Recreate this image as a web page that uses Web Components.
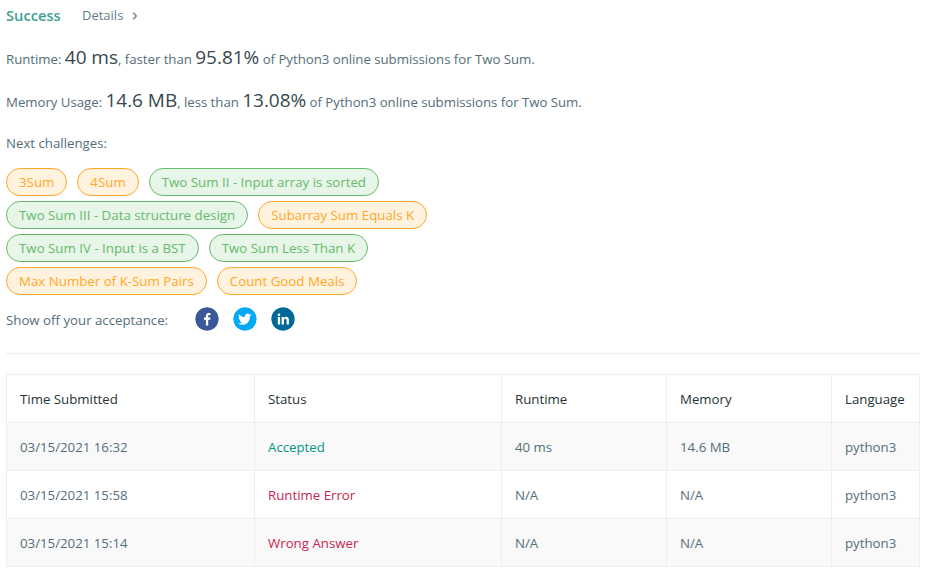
<!DOCTYPE html>
<html>
<head>
<meta charset="utf-8">
<title>Submission result</title>
<style>
    html, body { margin: 0; background: #fff; }
    body { font-family: "Open Sans", "Noto Sans", sans-serif; font-size: 13.25px; color: #546e7a; }
</style>
</head>
<body>
<result-page>
    <result-header></result-header>
    <stat-line label="Runtime" value="40 ms" cmp="faster" pct="95.81%"></stat-line>
    <stat-line label="Memory Usage" value="14.6 MB" cmp="less" pct="13.08%"></stat-line>
    <next-challenges>
        <tag-pill kind="medium">3Sum</tag-pill>
        <tag-pill kind="medium">4Sum</tag-pill>
        <tag-pill kind="easy">Two Sum II - Input array is sorted</tag-pill>
        <tag-pill kind="easy">Two Sum III - Data structure design</tag-pill>
        <tag-pill kind="medium">Subarray Sum Equals K</tag-pill>
        <tag-pill kind="easy">Two Sum IV - Input is a BST</tag-pill>
        <tag-pill kind="easy">Two Sum Less Than K</tag-pill>
        <tag-pill kind="medium">Max Number of K-Sum Pairs</tag-pill>
        <tag-pill kind="medium">Count Good Meals</tag-pill>
    </next-challenges>
    <share-row></share-row>
    <submission-table></submission-table>
</result-page>

<script>
class ResultPage extends HTMLElement {
    constructor() {
        super();
        this.attachShadow({mode: 'open'});
        this.shadowRoot.innerHTML = `<style>
            :host { display: block; padding: 0 7px 0 6px; }
        </style><slot></slot>`;
    }
}

class ResultHeader extends HTMLElement {
    constructor() {
        super();
        this.attachShadow({mode: 'open'});
        this.shadowRoot.innerHTML = `<style>
            :host { display: flex; align-items: center; height: 30px; margin-bottom: 8px; }
            .ok { font-weight: 600; font-size: 14.7px; color: #3d9f94; width: 76px; }
            .details { color: #607d8b; font-size: 13px; }
            svg { margin-left: 9px; margin-top: 2px; }
        </style>
        <span class="ok">Success</span>
        <span class="details">Details</span>
        <svg width="6" height="8" viewBox="0 0 6 8"><path d="M1.2 .8 4.4 4 1.2 7.2" fill="none" stroke="#607d8b" stroke-width="1.3"/></svg>`;
    }
}

class StatLine extends HTMLElement {
    constructor() {
        super();
        this.attachShadow({mode: 'open'});
        const a = n => this.getAttribute(n);
        this.shadowRoot.innerHTML = `<style>
            :host { display: block; height: 43px; line-height: 43px; white-space: pre; font-size: 13.25px; letter-spacing: -0.035px; }
            b { font-weight: 400; font-size: 19px; color: #37474f; line-height: 1; }
        </style><span>${a('label')}: <b>${a('value')}</b>, ${a('cmp')} than <b>${a('pct')}</b> of Python3 online submissions for Two Sum.</span>`;
    }
}

class NextChallenges extends HTMLElement {
    constructor() {
        super();
        this.attachShadow({mode: 'open'});
        this.shadowRoot.innerHTML = `<style>
            :host { display: block; }
            p { margin: 0; height: 38px; line-height: 38px; }
            .list { display: flex; flex-wrap: wrap; column-gap: 10px; row-gap: 5px; padding-top: 6px; width: 440px; }
        </style><p>Next challenges:</p><div class="list"><slot></slot></div>`;
    }
}

class TagPill extends HTMLElement {
    constructor() {
        super();
        this.attachShadow({mode: 'open'});
        this.shadowRoot.innerHTML = `<style>
            :host { display: inline-flex; align-items: center; box-sizing: border-box; height: 28px; padding: 0 12px; border-radius: 14px; border: 1px solid; font-size: 13.3px; white-space: nowrap; }
            :host([kind=medium]) { color: #ffa726; background: #fff3e0; border-color: #ffa726; }
            :host([kind=easy]) { color: #66bb6a; background: #e8f5e9; border-color: #66bb6a; }
        </style><slot></slot>`;
    }
}

class ShareRow extends HTMLElement {
    constructor() {
        super();
        this.attachShadow({mode: 'open'});
        this.shadowRoot.innerHTML = `<style>
            :host { display: flex; align-items: center; height: 24px; margin-top: 12px; padding-bottom: 22px; border-bottom: 1px solid #eeeeee; }
            .label { width: 189px; margin-top: 2px; }
            .ic { width: 24px; height: 24px; border-radius: 50%; margin-right: 14px; }
            svg { display: block; }
        </style>
        <span class="label">Show off your acceptance:</span>
        <svg class="ic" viewBox="0 0 24 24"><circle cx="12" cy="12" r="11.7" fill="#3b5998"/><path d="M13.2 18.500v-5.700h1.900l.3-2.300h-2.200V9.100c0-.7.2-1.100 1.100-1.100h1.200V6c-.2 0-.9-.1-1.700-.1-1.700 0-2.900 1-2.900 3v1.600H9v2.300h1.900v5.700z" fill="#fff"/></svg>
        <svg class="ic" viewBox="0 0 24 24"><circle cx="12" cy="12" r="11.7" fill="#03a9f4"/><path d="M18.800 8c-.5.2-1 .4-1.600.4.600-.3 1-.8 1.200-1.500-.5.3-1.100.5-1.800.7a2.800 2.800 0 0 0-4.800 2.500c-2.300-.1-4.400-1.200-5.800-2.900-.7 1.300-.4 2.900.9 3.800-.5 0-.9-.1-1.300-.4 0 1.400 1 2.500 2.300 2.800-.4.1-.9.1-1.300 0 .4 1.100 1.400 1.900 2.600 2-1.200.9-2.700 1.300-4.200 1.100 4.900 3.100 11.900.5 11.900-7.100v-.4c.6-.3 1.100-.8 1.500-1.400z" fill="#fff"/></svg>
        <svg class="ic" viewBox="0 0 24 24"><circle cx="12" cy="12" r="11.7" fill="#006997"/><path d="M6.800 10h2.300v7.400H6.800zM8 6.400a1.300 1.300 0 1 1 0 2.700 1.300 1.300 0 0 1 0-2.700zM10.600 10h2.200v1c.4-.7 1.200-1.200 2.300-1.200 2.300 0 2.800 1.500 2.800 3.500v4.100h-2.300v-3.600c0-.9 0-2-1.200-2s-1.500 1-1.500 2v3.600h-2.300z" fill="#fff"/></svg>`;
    }
}

class SubmissionTable extends HTMLElement {
    constructor() {
        super();
        this.attachShadow({mode: 'open'});
        const rows = [
            ['03/15/2021 16:32', 'Accepted', 'ok', '40 ms', '14.6 MB', 'python3'],
            ['03/15/2021 15:58', 'Runtime Error', 'bad', 'N/A', 'N/A', 'python3'],
            ['03/15/2021 15:14', 'Wrong Answer', 'bad', 'N/A', 'N/A', 'python3']
        ];
        const body = rows.map(r => `<tr>
            <td>${r[0]}</td><td class="${r[2]}">${r[1]}</td><td>${r[3]}</td><td>${r[4]}</td><td>${r[5]}</td>
        </tr>`).join('');
        this.shadowRoot.innerHTML = `<style>
            :host { display: block; margin-top: 20px; }
            table { border-collapse: collapse; table-layout: fixed; width: 914px; font-size: inherit; }
            th, td { border: 1px solid #eeeeee; height: 48px; padding: 0 0 0 13px; text-align: left; font-weight: 400; white-space: nowrap; box-sizing: border-box; }
            th { color: #263238; }
            td { color: #546e7a; }
            tbody tr:nth-child(odd) { background: #f9f9f9; }
            .ok { color: #009688; }
            .bad { color: #c62851; }
        </style>
        <table>
            <colgroup><col style="width:248px"><col style="width:247px"><col style="width:165px"><col style="width:165px"><col style="width:88px"></colgroup>
            <thead><tr><th>Time Submitted</th><th>Status</th><th>Runtime</th><th>Memory</th><th>Language</th></tr></thead>
            <tbody>${body}</tbody>
        </table>`;
    }
}

customElements.define('result-page', ResultPage);
customElements.define('result-header', ResultHeader);
customElements.define('stat-line', StatLine);
customElements.define('next-challenges', NextChallenges);
customElements.define('tag-pill', TagPill);
customElements.define('share-row', ShareRow);
customElements.define('submission-table', SubmissionTable);
</script>
</body>
</html>
